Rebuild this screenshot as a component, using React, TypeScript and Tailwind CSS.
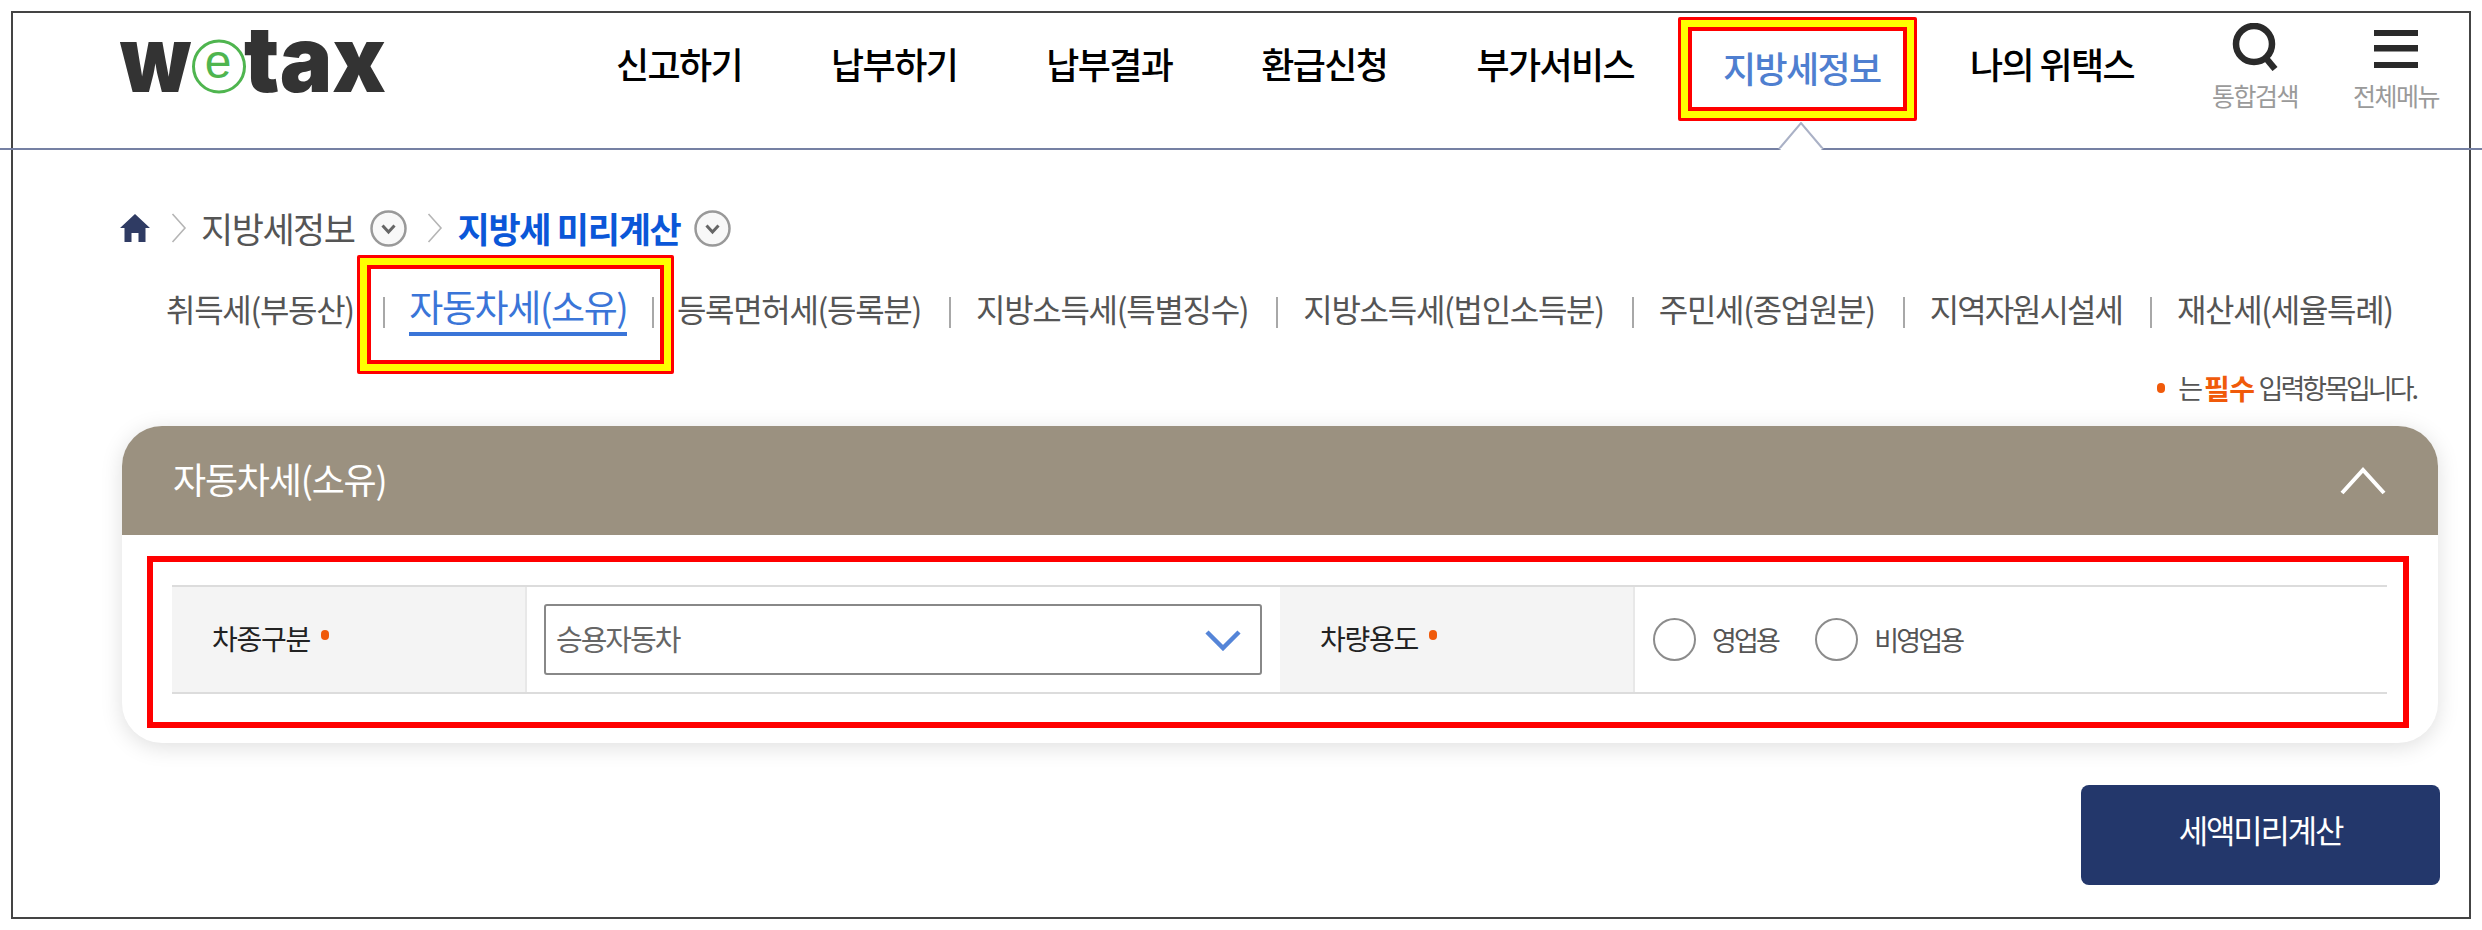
import React from "react";

function Logo() {
  return (
    <svg width="266" height="111" viewBox="0 -25 266 111" className="block">
      <g fontFamily="Inter, 'Liberation Sans', sans-serif" fontWeight="900" fill="#333333" fontSize="92">
        <text x="0" y="64" textLength="71" lengthAdjust="spacingAndGlyphs">w</text>
        <text x="124" y="64" textLength="142" lengthAdjust="spacingAndGlyphs">tax</text>
      </g>
      <circle cx="99" cy="38.5" r="25.5" fill="#ffffff" stroke="#4fb54f" strokeWidth="3" />
      <text x="98" y="50" textAnchor="middle" fontFamily="'Liberation Sans', sans-serif" fontSize="48" fill="#4fb54f">e</text>
    </svg>
  );
}

function Highlight({ className, innerClassName, children }: { className: string; innerClassName: string; children: React.ReactNode }) {
  return (
    <div className={`box-border border-[3px] border-[#ff0000] bg-[#ffff00] p-[7px] rounded-[2px] ${className}`}>
      <div className={`box-border h-full border-[4px] border-[#ff0000] bg-white ${innerClassName}`}>{children}</div>
    </div>
  );
}

function Thin() {
  return (
    <svg width="16" height="30" viewBox="0 0 16 30" className="block">
      <path d="M1.5 1 L14 15 L1.5 29" fill="none" stroke="#b5b5b5" strokeWidth="1.6" />
    </svg>
  );
}

function CircleDown() {
  return (
    <svg width="37" height="37" viewBox="0 0 37 37" className="block">
      <circle cx="18.5" cy="18.5" r="17" fill="#f8f8f8" stroke="#999999" strokeWidth="2.5" />
      <path d="M12.5 15.5 L18.5 22 L24.5 15.5" fill="none" stroke="#666666" strokeWidth="3" />
    </svg>
  );
}

function Dot() {
  return <span className="block w-[8px] h-[10px] rounded-full bg-[#f05a0a]" />;
}

function Sep() {
  return <span className="block w-[2px] h-[31px] bg-[#a8a8a8] mt-[42px] ml-[28px] mr-[25px]" />;
}

function Tab({ children, tight }: { children: React.ReactNode; tight?: boolean }) {
  return (
    <span className={`block mt-[30px] text-[32px] leading-[46px] text-[#555555] whitespace-nowrap ${tight ? "tracking-[-2px]" : "tracking-[-1.3px]"}`}>
      {children}
    </span>
  );
}

function Label({ children }: { children: React.ReactNode }) {
  return (
    <div className="w-[355px] shrink-0 bg-[#f4f4f4] flex items-center pl-[40px] pb-[4px] border-r-2 border-[#e8e8e8] box-border">
      <span className="text-[28px] leading-[36px] tracking-[-1.3px] text-[#222222] whitespace-nowrap">{children}</span>
      <span className="ml-[11px] mb-[6px]"><Dot /></span>
    </div>
  );
}

function Radio({ label }: { label: string }) {
  return (
    <div className="flex items-center">
      <span className="block w-[43px] h-[43px] rounded-full border-2 border-[#8c8c8c] bg-white box-border" />
      <span className="ml-[16px] text-[27px] leading-[34px] tracking-[-2.8px] text-[#555555] whitespace-nowrap">{label}</span>
    </div>
  );
}

export default function App() {
  const nav = ["신고하기", "납부하기", "납부결과", "환급신청", "부가서비스"];
  return (
    <div className="w-[2482px] h-[930px] bg-white pt-[11px] pl-[11px] overflow-hidden font-['Noto_Sans_CJK_KR','Liberation_Sans',sans-serif]">
      <div className="w-[2460px] h-[908px] box-border border-2 border-[#444444]">
        <header className="relative -ml-[13px] w-[2482px] h-[137px] box-border border-b-2 border-[#7580a3] flex items-start">
          <div className="ml-[120px] -mt-[10px] shrink-0"><Logo /></div>
          <nav className="ml-[230px] flex items-start tracking-[-1.6px]">
            <div className="flex gap-[89px] pt-[26px] text-[36px] leading-[48px] font-medium text-black whitespace-nowrap">
              {nav.map((n) => (
                <span key={n}>{n}</span>
              ))}
            </div>
            <Highlight className="mt-[4px] ml-[44px] w-[239px] h-[104px] shrink-0" innerClassName="pl-[31px] pt-[12px]">
              <span className="block text-[36px] leading-[48px] font-medium text-[#4f7fd0] whitespace-nowrap">지방세정보</span>
            </Highlight>
            <span className="ml-[53px] pt-[26px] text-[36px] leading-[48px] font-medium text-black whitespace-nowrap">나의 위택스</span>
          </nav>
          <div className="ml-auto mr-[43px] flex gap-[55px] pt-[10px] text-[25px] leading-[36px] tracking-[-1.5px] text-[#9a9a9a] whitespace-nowrap">
            <div className="flex flex-col items-center">
              <svg width="50" height="48" viewBox="0 0 50 48" className="block">
                <circle cx="24" cy="21" r="18" fill="none" stroke="#2a2a2a" strokeWidth="6.5" />
                <path d="M35 34 L45 46" fill="none" stroke="#2a2a2a" strokeWidth="6.5" />
              </svg>
              <span className="mt-[6px]">통합검색</span>
            </div>
            <div className="flex flex-col items-center">
              <svg width="44" height="48" viewBox="0 0 44 48" className="block">
                <rect x="0" y="7" width="44" height="6" fill="#2a2a2a" />
                <rect x="0" y="22" width="44" height="6.5" fill="#2a2a2a" />
                <rect x="0" y="39" width="44" height="6" fill="#2a2a2a" />
              </svg>
              <span className="mt-[6px]">전체메뉴</span>
            </div>
          </div>
          <svg width="48" height="28" viewBox="0 0 48 28" className="absolute left-[1777px] top-[109px]">
            <path d="M2 27 L24 1 L46 27" fill="#ffffff" stroke="#aab1c6" strokeWidth="2" />
            <path d="M3.5 27.5 L44.5 27.5" stroke="#ffffff" strokeWidth="3" />
          </svg>
        </header>

        <main className="pl-[107px]">
          <div className="mt-[60px] h-[36px] flex items-center whitespace-nowrap">
            <svg width="30" height="30" viewBox="0 0 30 30" className="block shrink-0">
              <path d="M15 1 L30 15 L25.5 15 L25.5 29 L18.5 29 L18.5 20 L11.5 20 L11.5 29 L4.5 29 L4.5 15 L0 15 Z" fill="#2f3b63" />
            </svg>
            <span className="ml-[21px]"><Thin /></span>
            <span className="ml-[14px] text-[35px] leading-[36px] tracking-[-1.5px] text-[#555555]">지방세정보</span>
            <span className="ml-[15px]"><CircleDown /></span>
            <span className="ml-[20px]"><Thin /></span>
            <span className="ml-[15px] text-[35px] leading-[36px] tracking-[-1.3px] font-semibold text-[#0b57d8]">지방세 미리계산</span>
            <span className="ml-[14px]"><CircleDown /></span>
          </div>

          <div className="mt-[9px] h-[119px] flex items-start pl-[46px]">
            <Tab>취득세(부동산)</Tab>
            <Highlight className="ml-[3px] mr-[3px] w-[317px] h-[119px] shrink-0" innerClassName="flex items-start justify-between pl-[12px] pr-[6px]">
              <span className="block w-[2px] h-[31px] bg-[#a8a8a8] mt-[28px]" />
              <span className="block mt-[10px] h-[57px] box-border border-b-4 border-[#3a75d8] text-[37px] leading-[54px] tracking-[-1.4px] text-[#3a75d8] whitespace-nowrap">자동차세(소유)</span>
              <span className="block w-[2px] h-[31px] bg-[#a8a8a8] mt-[28px]" />
            </Highlight>
            <Tab>등록면허세(등록분)</Tab>
            <Sep />
            <Tab>지방소득세(특별징수)</Tab>
            <Sep />
            <Tab>지방소득세(법인소득분)</Tab>
            <Sep />
            <Tab>주민세(종업원분)</Tab>
            <Sep />
            <Tab tight>지역자원시설세</Tab>
            <Sep />
            <Tab>재산세(세율특례)</Tab>
          </div>

          <div className="h-[28px] flex items-center justify-end pr-[53px] text-[27px] leading-[28px] tracking-[-3px] text-[#555555] whitespace-nowrap">
            <Dot />
            <span className="ml-[13px]">는</span>
            <span className="ml-[4px] text-[28px] tracking-[-0.5px] font-bold text-[#f05a0a]">필수</span>
            <span className="ml-[4px]">입력항목입니다.</span>
          </div>

          <section className="mt-[24px] ml-[2px] w-[2316px] h-[317px] rounded-[40px] bg-white shadow-[0_4px_22px_rgba(0,0,0,0.13)] overflow-hidden">
            <div className="h-[109px] bg-[#9b9180] flex items-center justify-between pl-[51px] pr-[52px]">
              <span className="pb-[5px] text-[36px] leading-[48px] tracking-[-1.2px] text-white whitespace-nowrap">자동차세(소유)</span>
              <svg width="46" height="28" viewBox="0 0 46 28" className="block">
                <path d="M2 26 L23 3 L44 26" fill="none" stroke="#ffffff" strokeWidth="4" />
              </svg>
            </div>
            <div className="mt-[21px] ml-[25px] w-[2262px] h-[172px] box-border border-[6px] border-[#ff0000] pt-[23px] pl-[19px]">
              <div className="w-[2215px] h-[109px] box-border border-y-2 border-[#dcdcdc] flex">
                <Label>차종구분</Label>
                <div className="w-[753px] shrink-0 flex items-center pl-[17px]">
                  <div className="w-[718px] h-[71px] box-border border-2 border-[#888888] rounded-[3px] flex items-center justify-between pl-[10px] pr-[19px]">
                    <span className="pb-[3px] text-[29px] leading-[36px] tracking-[-2px] text-[#666666] whitespace-nowrap">승용자동차</span>
                    <svg width="36" height="22" viewBox="0 0 36 22" className="block">
                      <path d="M2 3 L18 19 L34 3" fill="none" stroke="#5585d8" strokeWidth="4.5" />
                    </svg>
                  </div>
                </div>
                <Label>차량용도</Label>
                <div className="flex-1 flex items-center pl-[18px] gap-[37px]">
                  <Radio label="영업용" />
                  <Radio label="비영업용" />
                </div>
              </div>
            </div>
          </section>

          <div className="mt-[42px] w-[2320px] flex justify-end">
            <div className="w-[359px] h-[100px] rounded-[8px] bg-[#23376b] flex justify-center items-center pb-[12px] text-[32px] leading-[44px] tracking-[-2.2px] text-white whitespace-nowrap">세액미리계산</div>
          </div>
        </main>
      </div>
    </div>
  );
}
